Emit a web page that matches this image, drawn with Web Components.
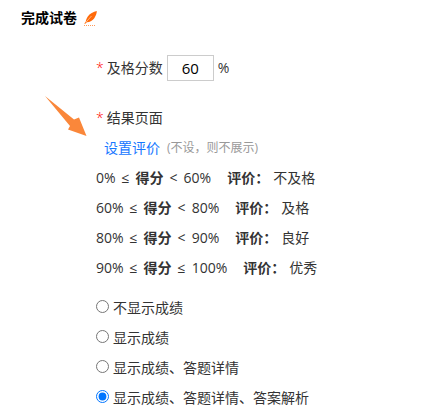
<!DOCTYPE html>
<html lang="zh-CN">
<head>
<meta charset="utf-8">
<title>完成试卷</title>
<style>
body { margin: 0; background: #fff; color: #333; font: 14px/30px "Open Sans", "Noto Sans CJK SC", sans-serif; }
</style>
</head>
<body>
<exam-settings></exam-settings>
<script>
const define = (name, html, setup) => customElements.define(name, class extends HTMLElement {
  constructor() {
    super();
    this.attachShadow({ mode: "open" }).innerHTML = html;
  }
  connectedCallback() { if (setup) setup(this, this.shadowRoot); }
});

define("section-title", `
<style>
:host { display: flex; align-items: center; gap: 7px; padding: 3px 21px; color: #000; }
h1 { margin: 0; font-size: 14px; font-weight: 700; line-height: 30px; }
svg { display: block; }
</style>
<h1><slot></slot></h1>
<svg width="13" height="16" viewBox="0 0 13 16" aria-hidden="true">
  <path d="M12.800 1C9.500 1.600 5.600 3.600 3.800 6.600C2.500 8.700 2 10.400 1.800 11.600L.4 13.400L1 14L2.800 12.300C6 12 8.800 10.500 10.300 8.200C11.900 5.700 12.800 3.200 12.800 1Z" fill="#ff6a0a"/>
  <path d="M2 12.200L7.500 6" stroke="#ffd0ac" stroke-width=".7" fill="none"/>
  <path d="M0 15.500H11" stroke="#ff9a5a" stroke-width="1" stroke-dasharray="1 1" fill="none"/>
</svg>`);

define("required-mark", `
<style>:host { display: inline; color: #f00; font-weight: 300; margin-right: 3px; }</style><span aria-hidden="true">*</span>`);

define("pass-score", `
<style>
:host { display: flex; align-items: center; }
label { margin-right: 4px; }
input { box-sizing: border-box; width: 47px; height: 26px; margin: 0 4px 0 0; padding: 0; border: 1px solid #ccc; color: #000; background: #fff; font: inherit; font-size: 15px; text-align: center; }
</style>
<label for="score"><required-mark></required-mark>及格分数</label>
<input id="score" type="text" inputmode="numeric" value="60"><span>%</span>`);

define("grade-rule", `
<style>
:host { display: flex; align-items: center; gap: 6px; height: 30px; white-space: nowrap; }
b { font-weight: 700; }
.grade { margin-left: 10px; }
.name { margin-left: -2px; }
</style>
<slot name="from"></slot><span>≤</span><b>得分</b><slot name="op"></slot><slot name="to"></slot><b class="grade">评价：</b><span class="name"><slot></slot></span>`);

define("result-option", `
<style>
:host { display: block; }
label { display: flex; align-items: center; gap: 4px; height: 30px; }
input { width: 13px; height: 13px; margin: 0 0 3px; accent-color: #0075ff; }
</style>
<label><input type="radio" name="result"><span><slot></slot></span></label>`,
(host, root) => {
  const input = root.querySelector("input");
  input.checked = host.hasAttribute("checked");
  input.addEventListener("change", () => {
    for (const other of host.parentNode.querySelectorAll("result-option"))
      if (other !== host) other.shadowRoot.querySelector("input").checked = false;
  });
});

define("pointer-arrow", `
<style>
:host { position: absolute; left: 45px; top: 96px; pointer-events: none; }
svg { display: block; }
</style>
<svg width="42" height="41" viewBox="0 0 42 41" aria-hidden="true">
  <path d="M0 0L29 23.400L34 21.500L41.500 40L23 33.500L25 30Z" fill="#fa873a"/>
</svg>`);

define("exam-settings", `
<style>
:host { display: block; position: relative; }
form { padding: 17px 16px 3px 96px; }
.results { margin-top: 20px; }
.link { display: flex; align-items: center; gap: 7px; height: 30px; padding-left: 8px; }
a { color: #1677ff; text-decoration: none; }
small { font-size: 12px; color: #999; }
.options { margin-top: 10px; }
</style>
<section-title>完成试卷</section-title>
<form>
  <pass-score></pass-score>
  <div class="results">
    <div id="results"><required-mark></required-mark>结果页面</div>
    <div class="link"><a href="#evaluation">设置评价</a><small>(不设，则不展示)</small></div>
    <grade-rule><span slot="from">0%</span><span slot="op">&lt;</span><span slot="to">60%</span>不及格</grade-rule>
    <grade-rule><span slot="from">60%</span><span slot="op">&lt;</span><span slot="to">80%</span>及格</grade-rule>
    <grade-rule><span slot="from">80%</span><span slot="op">&lt;</span><span slot="to">90%</span>良好</grade-rule>
    <grade-rule><span slot="from">90%</span><span slot="op">≤</span><span slot="to">100%</span>优秀</grade-rule>
  </div>
  <div class="options" role="radiogroup" aria-labelledby="results">
    <result-option>不显示成绩</result-option>
    <result-option>显示成绩</result-option>
    <result-option>显示成绩、答题详情</result-option>
    <result-option checked>显示成绩、答题详情、答案解析</result-option>
  </div>
</form>
<pointer-arrow></pointer-arrow>`);
</script>
</body>
</html>
